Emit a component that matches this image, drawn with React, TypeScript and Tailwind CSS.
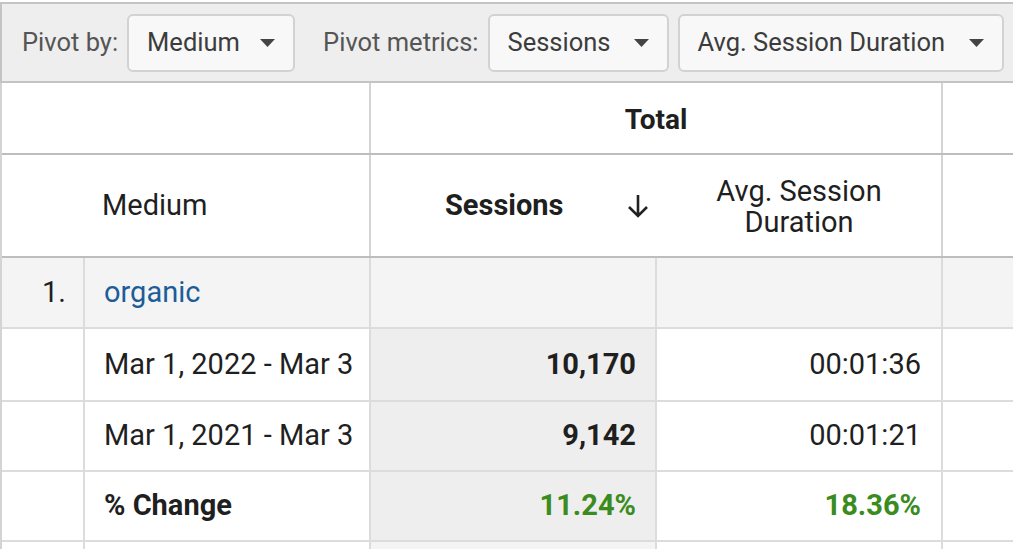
import React from "react";

const font = { fontFamily: "Roboto, 'Liberation Sans', sans-serif" };

function Caret() {
  return (
    <svg width="15" height="8" viewBox="0 0 15 8" className="shrink-0">
      <path d="M0 0 L15 0 L7.5 8 Z" fill="#444" />
    </svg>
  );
}

function Dropdown({ label, w }: { label: string; w: string }) {
  return (
    <div
      className={`${w} h-[58px] flex items-center justify-between pl-[18px] pr-[18px] bg-[#f8f8f8] border-2 border-[#d2d2d2] rounded-[6px] text-[25.5px] text-[#3c3c3c]`}
    >
      <span>{label}</span>
      <Caret />
    </div>
  );
}

function DownArrow() {
  return (
    <svg width="26" height="28" viewBox="0 0 26 28" className="shrink-0">
      <path d="M13 3 V24 M4 15 L13 24 L22 15" fill="none" stroke="#222" strokeWidth="2.6" />
    </svg>
  );
}

export default function App() {
  return (
    <div className="w-[1013px] h-[549px] overflow-hidden bg-white" style={font}>
      {/* toolbar */}
      <div className="mt-[2px] h-[81px] bg-[#eeeeee] border-t-2 border-l-2 border-b-2 border-[#c4c4c4] flex items-center pl-[20px] text-[25.5px] text-[#555]">
        <span>Pivot by:</span>
        <div className="ml-[9px]">
          <Dropdown label="Medium" w="w-[168px]" />
        </div>
        <span className="ml-[28px]">Pivot metrics:</span>
        <div className="ml-[9px]">
          <Dropdown label="Sessions" w="w-[181px]" />
        </div>
        <div className="ml-[9px]">
          <Dropdown label="Avg. Session Duration" w="w-[326px]" />
        </div>
      </div>

      {/* table */}
      <div className="border-l-2 border-[#d4d4d4] text-[29px] text-[#1f1f1f]">
        {/* header row 1 */}
        <div className="flex h-[72px] border-b-2 border-[#bdbdbd]">
          <div className="w-[369px] border-r-2 border-[#d4d4d4]" />
          <div className="w-[572px] border-r-2 border-[#d4d4d4] flex items-center justify-center pt-[3px] font-bold text-[28px]">
            Total
          </div>
          <div className="flex-1" />
        </div>
        {/* header row 2 */}
        <div className="flex h-[103px] border-b-2 border-[#bdbdbd]">
          <div className="w-[369px] border-r-2 border-[#d4d4d4] flex items-center pl-[100px]">
            Medium
          </div>
          <div className="w-[286px] flex items-center pl-[74px] pr-[6px] font-bold">
            <span>Sessions</span>
            <span className="ml-auto">
              <DownArrow />
            </span>
          </div>
          <div className="w-[286px] border-r-2 border-[#d4d4d4] flex items-center justify-center text-center leading-[31px] pt-[2px]">
            <span>
              Avg. Session
              <br />
              Duration
            </span>
          </div>
          <div className="flex-1" />
        </div>
        {/* organic row */}
        <div className="flex h-[71px] border-b-2 border-[#dcdcdc] bg-[#f4f4f4]">
          <div className="w-[83px] border-r-2 border-[#dcdcdc] flex items-center justify-end pr-[17px]">
            1.
          </div>
          <div className="w-[286px] border-r-2 border-[#dcdcdc] flex items-center pl-[19px] text-[#1c5d98]">
            organic
          </div>
          <div className="w-[286px] border-r-2 border-[#dcdcdc]" />
          <div className="w-[286px] border-r-2 border-[#dcdcdc]" />
          <div className="flex-1" />
        </div>
        {/* data rows */}
        {[
          { h: "h-[73px]", label: "Mar 1, 2022 - Mar 3", s: "10,170", d: "00:01:36", bold: false, green: false },
          { h: "h-[70px]", label: "Mar 1, 2021 - Mar 3", s: "9,142", d: "00:01:21", bold: false, green: false },
          { h: "h-[70px]", label: "% Change", s: "11.24%", d: "18.36%", bold: true, green: true },
        ].map((r) => (
          <div key={r.label} className={`flex ${r.h} border-b-2 border-[#dcdcdc]`}>
            <div className="w-[83px] border-r-2 border-[#dcdcdc]" />
            <div
              className={`w-[286px] border-r-2 border-[#dcdcdc] flex items-center pl-[19px] overflow-hidden whitespace-nowrap ${
                r.bold ? "font-bold" : ""
              }`}
            >
              {r.label}
            </div>
            <div
              className={`w-[286px] border-r-2 border-[#dcdcdc] bg-[#eeeeee] flex items-center justify-end pr-[19px] font-bold ${
                r.green ? "text-[#3a8c1e]" : ""
              }`}
            >
              {r.s}
            </div>
            <div
              className={`w-[286px] border-r-2 border-[#dcdcdc] flex items-center justify-end pr-[20px] ${
                r.green ? "font-bold text-[#3a8c1e]" : ""
              }`}
            >
              {r.d}
            </div>
            <div className="flex-1" />
          </div>
        ))}
        {/* partial next row */}
        <div className="flex h-[70px]">
          <div className="w-[83px] border-r-2 border-[#dcdcdc]" />
          <div className="w-[286px] border-r-2 border-[#dcdcdc]" />
          <div className="w-[286px] border-r-2 border-[#dcdcdc] bg-[#f4f4f4]" />
          <div className="w-[286px] border-r-2 border-[#dcdcdc]" />
          <div className="flex-1" />
        </div>
      </div>
    </div>
  );
}
